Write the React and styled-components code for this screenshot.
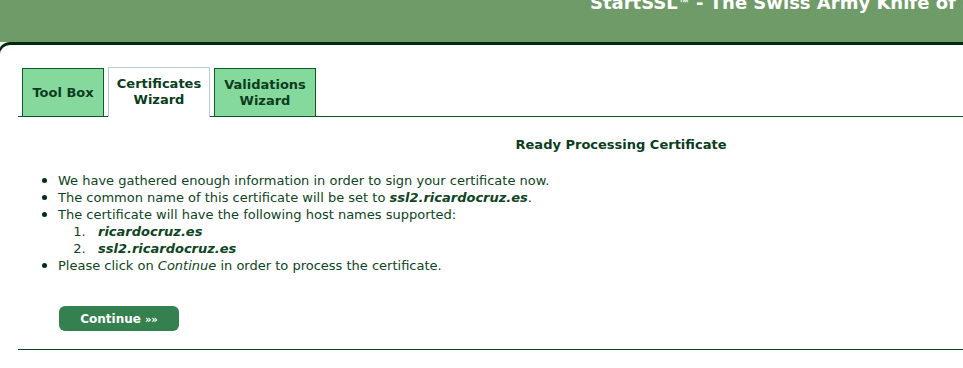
import React from "react";
import styled, { createGlobalStyle } from "styled-components";

const GlobalStyle = createGlobalStyle`
  html, body {
    margin: 0;
    padding: 0;
    background: #ffffff;
    overflow: hidden;
  }
  body {
    font-family: "DejaVu Sans", Verdana, sans-serif;
    font-size: 13px;
    color: #0d4422;
  }
`;

const Header = styled.div`
  height: 42px;
  background: #6f9b69;
  overflow: hidden;
  white-space: nowrap;
`;

const Title = styled.h1`
  margin: -7px 0 0 0;
  padding-left: 590px;
  font-size: 18px;
  line-height: 20px;
  font-weight: bold;
  color: #ffffff;
`;

const Trademark = styled.sup`
  font-family: "Liberation Sans", Arial, sans-serif;
  font-size: 10px;
  vertical-align: 3px;
  line-height: 0;
  margin: 0 1px;
`;

const Panel = styled.div`
  margin-left: -2px;
  width: 1206px;
  border-top: 3px solid #00290c;
  border-left: 2px solid #00290c;
  border-top-left-radius: 12px;
  background: #ffffff;
  padding: 22px 0 0 18px;
`;

const TabBar = styled.div`
  display: flex;
  align-items: flex-end;
  gap: 4px;
  padding-left: 4px;
  border-bottom: 1px solid #0b5526;
  height: 49px;
`;

const Tab = styled.div`
  box-sizing: border-box;
  width: ${props => props.$width}px;
  height: ${props => (props.$active ? 50 : 48)}px;
  margin-bottom: ${props => (props.$active ? -1 : 0)}px;
  display: flex;
  align-items: center;
  justify-content: center;
  text-align: center;
  font-weight: bold;
  font-size: 13px;
  line-height: 16px;
  color: #0a3d1e;
  background: ${props => (props.$active ? "#ffffff" : "#86d99c")};
  border: 1px solid ${props => (props.$active ? "#b9c9d6" : "#0b5e28")};
  border-bottom: none;
  padding-bottom: ${props => (props.$active ? 2 : 0)}px;
`;

const Content = styled.div`
  padding: 20px 0 0 0;
`;

const Heading = styled.h2`
  margin: 0;
  text-align: center;
  font-size: 13px;
  font-weight: bold;
  line-height: 16px;
  color: #0a3d1e;
`;

const BulletList = styled.ul`
  margin: 19px 0 0 0;
  padding-left: 40px;
  line-height: 17px;
  font-size: 13px;
  color: #0d4422;
  li::marker {
    color: #042e10;
    font-size: 15px;
  }
`;

const HostList = styled.ol`
  margin: 0;
  padding-left: 40px;
  font-weight: bold;
  font-style: italic;
  li::marker {
    content: counter(list-item) ".\\00a0\\00a0\\00a0";
    font-weight: normal;
    font-style: normal;
    font-size: 13px;
    color: #0d4422;
  }
`;

const Strong = styled.b`
  font-style: italic;
`;

const ButtonRow = styled.div`
  padding: 32px 0 0 41px;
`;

const Button = styled.button`
  width: 120px;
  height: 25px;
  border: none;
  border-radius: 6px;
  background: #35804f;
  color: #ffffff;
  font-family: "DejaVu Sans", Verdana, sans-serif;
  font-size: 12px;
  font-weight: bold;
  cursor: pointer;
  span {
    font-size: 10px;
    margin-left: 4px;
  }
`;

const Rule = styled.div`
  margin-top: 18px;
  border-top: 1px solid #0b4a22;
`;

export default function App() {
  return (
    <>
      <GlobalStyle />
      <Header>
        <Title>StartSSL<Trademark>™</Trademark> - The Swiss Army Knife of SSL Security</Title>
      </Header>
      <Panel>
        <TabBar>
          <Tab $width={82}>Tool Box</Tab>
          <Tab $width={102} $active>Certificates<br />Wizard</Tab>
          <Tab $width={102}>Validations<br />Wizard</Tab>
        </TabBar>
        <Content>
          <Heading>Ready Processing Certificate</Heading>
          <BulletList>
            <li>We have gathered enough information in order to sign your certificate now.</li>
            <li>The common name of this certificate will be set to <Strong>ssl2.ricardocruz.es</Strong>.</li>
            <li>
              The certificate will have the following host names supported:
              <HostList>
                <li>ricardocruz.es</li>
                <li>ssl2.ricardocruz.es</li>
              </HostList>
            </li>
            <li>Please click on <i>Continue</i> in order to process the certificate.</li>
          </BulletList>
          <ButtonRow>
            <Button>Continue<span>»»</span></Button>
          </ButtonRow>
          <Rule />
        </Content>
      </Panel>
    </>
  );
}
